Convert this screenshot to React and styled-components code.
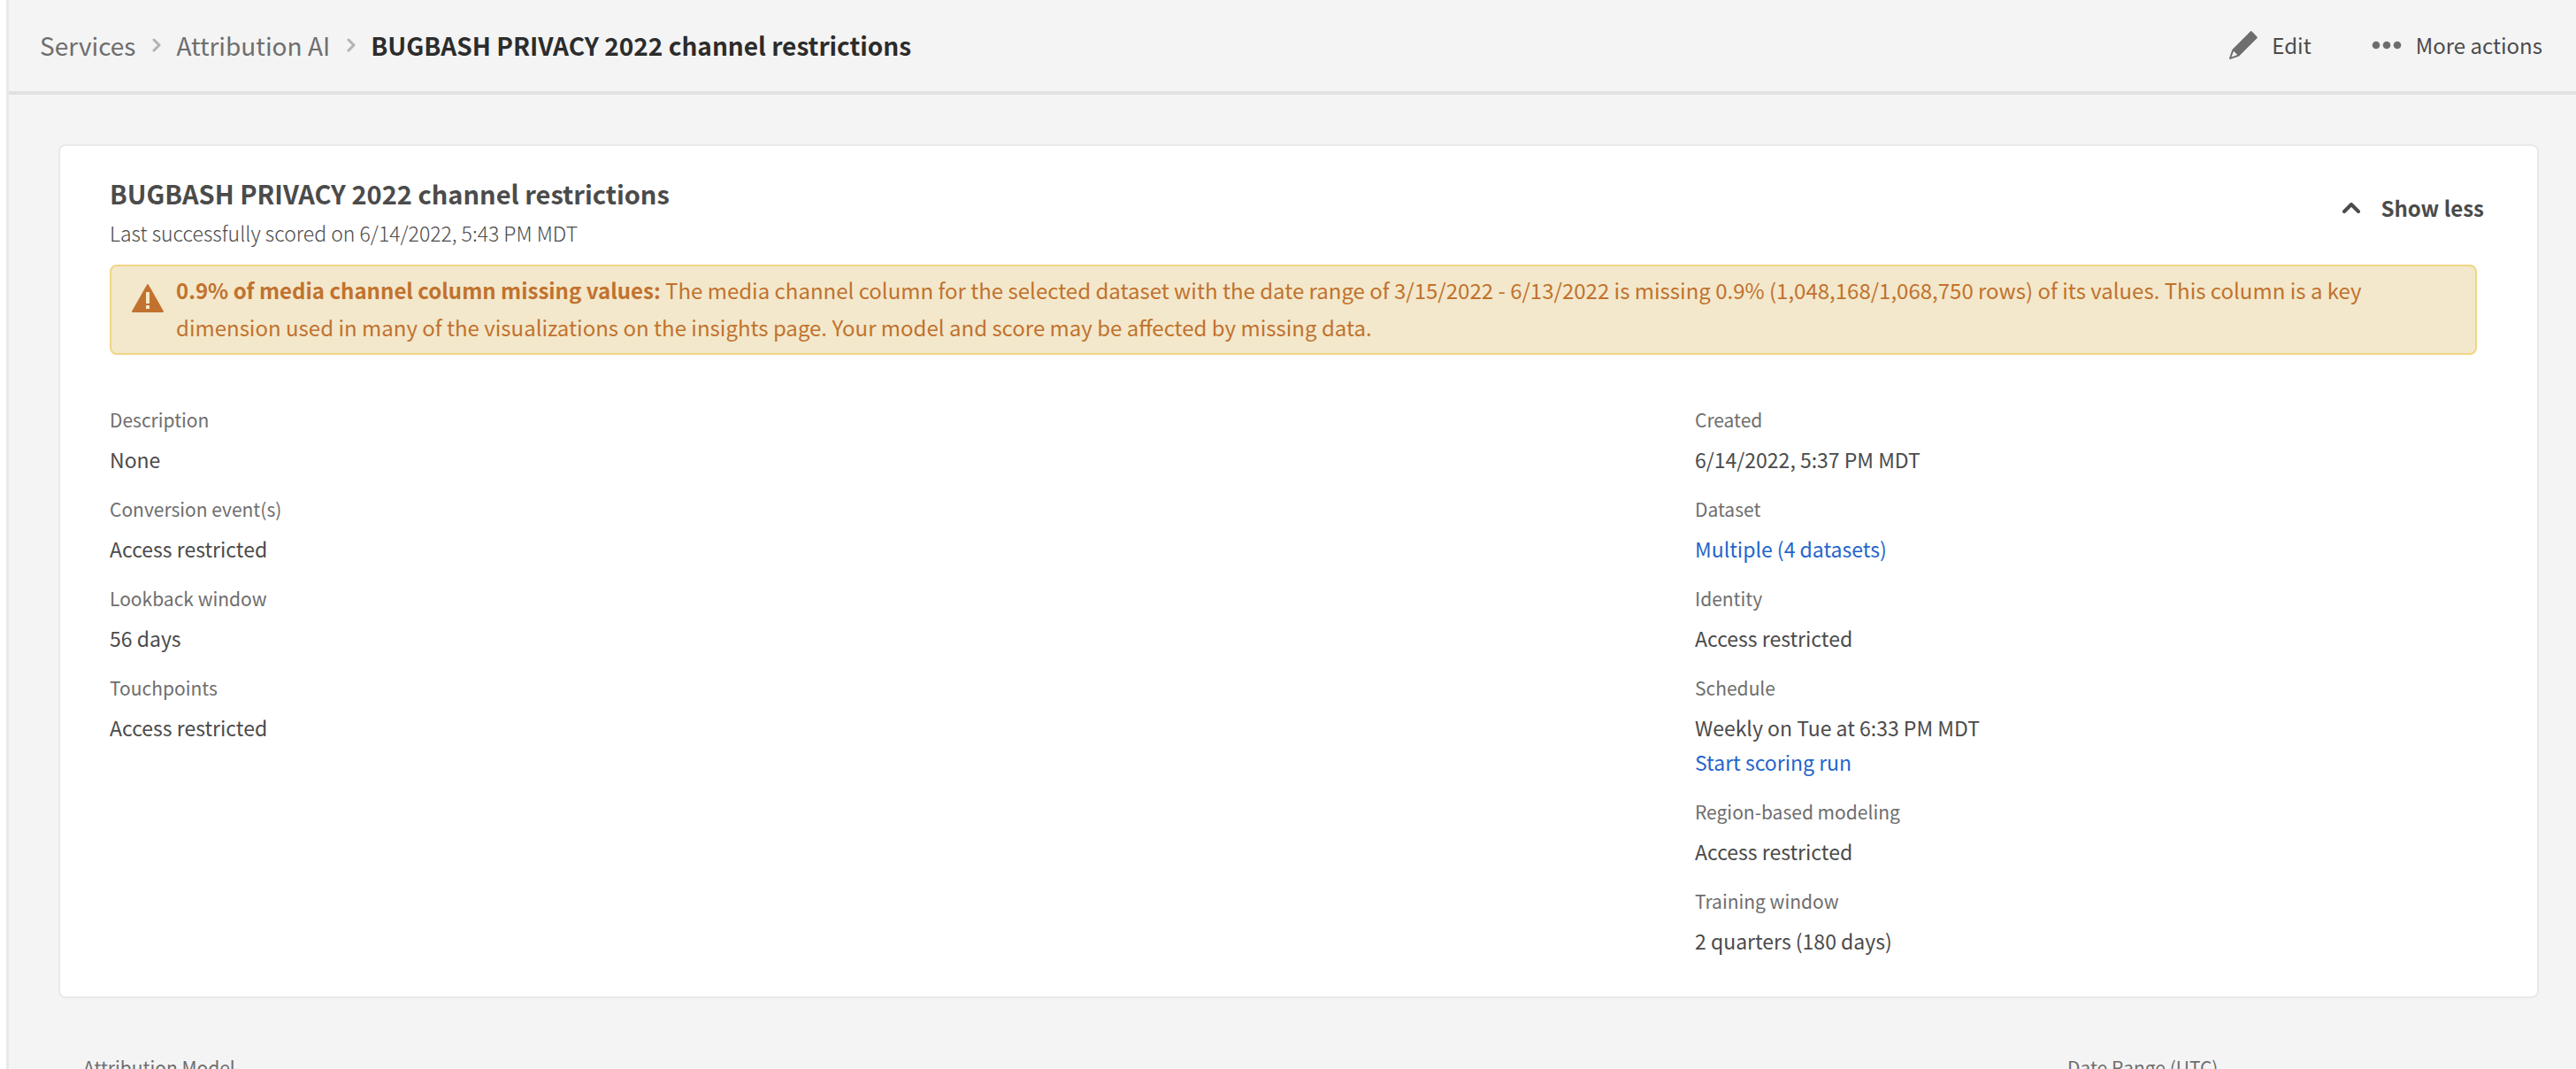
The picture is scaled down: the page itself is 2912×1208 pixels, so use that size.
import React, { useState } from 'react';
import styled, { createGlobalStyle } from 'styled-components';

const GlobalStyle = createGlobalStyle`
  * {
    box-sizing: border-box;
  }

  body {
    margin: 0;
    background: #ffffff;
    color: #4b4b4b;
    font-family: 'Noto Sans CJK SC', 'Noto Sans', sans-serif;
    font-size: 23px;
    line-height: 40px;
  }
`;

const Shell = styled.div`
  height: 100vh;
  margin-left: 7px;
  overflow: hidden;
  border-left: 3px solid #e9e9e9;
  background: #f4f4f4;
`;

const Header = styled.header`
  display: flex;
  align-items: center;
  justify-content: space-between;
  padding: 31px 38px 32px 35px;
  border-bottom: 4px solid #e1e1e1;
`;

const Crumbs = styled.ol`
  display: flex;
  align-items: center;
  gap: 16px;
  margin: 0;
  padding: 0;
  list-style: none;
  font-size: 28px;
`;

const Crumb = styled.li`
  display: flex;
  align-items: center;
  gap: 18px;
  color: #2c2c2c;
  font-weight: ${({ $current }) => ($current ? 700 : 400)};
`;

const CrumbLink = styled.a`
  color: #6e6e6e;
  text-decoration: none;
`;

const Actions = styled.div`
  display: flex;
  gap: 68px;
`;

const QuietButton = styled.button`
  display: flex;
  align-items: center;
  gap: ${({ $gap }) => $gap}px;
  margin: 0;
  padding: 0;
  border: 0;
  background: none;
  color: #4b4b4b;
  font-family: inherit;
  font-size: 24px;
  font-weight: ${({ $strong }) => ($strong ? 700 : 400)};
  line-height: 40px;
  cursor: pointer;
`;

const Main = styled.main`
  padding: 56px 42px 0 56px;
`;

const Card = styled.section`
  padding: 33px 60px 43px 56px;
  border: 2px solid #e9e9e9;
  border-radius: 8px;
  background: #ffffff;
`;

const CardHead = styled.div`
  display: flex;
  align-items: flex-start;
  justify-content: space-between;
  margin-bottom: 20px;
`;

const CardToggle = styled.div`
  padding-top: 17px;
`;

const Title = styled.h1`
  margin: 0 0 9px;
  font-size: 29px;
  font-weight: 700;
  line-height: 40px;
`;

const Subtitle = styled.p`
  margin: 0;
  font-weight: 300;
  line-height: 32px;
`;

const Alert = styled.div`
  display: flex;
  gap: 14px;
  margin-right: 8px;
  padding: 6px 40px 8px 23px;
  border: 2px solid #f0d584;
  border-radius: 8px;
  background: #f3e8cb;
  color: #c1722e;
  font-size: 24px;
  line-height: 42px;
`;

const AlertIcon = styled.svg`
  flex: none;
  width: 36px;
  height: 32px;
  margin-top: 14px;
`;

const AlertText = styled.p`
  margin: 0;
`;

const Details = styled.div`
  display: grid;
  grid-template-columns: 2fr 1fr;
  column-gap: 8px;
  margin-top: 54px;
`;

const Column = styled.dl`
  display: flex;
  flex-direction: column;
  gap: 17px;
  margin: 0;
`;

const Term = styled.dt`
  margin-bottom: 6px;
  color: #6e6e6e;
  font-size: 21px;
  line-height: 39px;
`;

const Value = styled.dd`
  margin: 0;
  line-height: 39px;
`;

const ValueLink = styled.a`
  color: #2465cb;
  text-decoration: none;
`;

const Filters = styled.div`
  display: flex;
  justify-content: space-between;
  padding: 62px 28px 0;
`;

const FilterLabel = styled.div`
  flex: ${({ $width }) => ($width ? `0 0 ${$width}px` : '1')};
  color: #6e6e6e;
  font-size: 21px;
  line-height: 32px;
`;

const CrumbChevron = () => (
  <svg width="12" height="16" viewBox="0 0 12 16" fill="none" aria-hidden="true">
    <path d="M3 2l6 6-6 6" stroke="#b3b3b3" strokeWidth="3" strokeLinecap="round" strokeLinejoin="round" />
  </svg>
);

const PencilIcon = () => (
  <svg width="32" height="32" viewBox="0 0 32 32" fill="#6e6e6e" aria-hidden="true">
    <path
      fillRule="evenodd"
      d="M23.8.6a1.2 1.2 0 0 1 1.8 0l5.8 5.8a1.2 1.2 0 0 1 0 1.8L11 28.6 1 32a.8.8 0 0 1-1-1l3.4-10zM5 22.8L2.4 29.6l6.8-2.6z"
    />
  </svg>
);

const MoreIcon = () => (
  <svg width="34" height="10" viewBox="0 0 34 10" fill="#6e6e6e" aria-hidden="true">
    <circle cx="5" cy="5" r="4.3" />
    <circle cx="17" cy="5" r="4.3" />
    <circle cx="29" cy="5" r="4.3" />
  </svg>
);

const CollapseIcon = () => (
  <svg width="20" height="12" viewBox="0 0 20 12" fill="none" aria-hidden="true">
    <path d="M2 10l8-8 8 8" stroke="#4b4b4b" strokeWidth="4" strokeLinecap="round" strokeLinejoin="round" />
  </svg>
);

const WarningIcon = () => (
  <AlertIcon viewBox="0 0 36 32" aria-hidden="true">
    <path d="M17.2.6a1 1 0 0 1 1.6 0l17 30a1 1 0 0 1-.8 1.4H1a1 1 0 0 1-.8-1.4z" fill="#c1722e" />
    <rect x="16" y="9" width="4" height="13" rx="0.6" fill="#f3e8cb" />
    <rect x="16" y="24" width="4" height="4" rx="0.6" fill="#f3e8cb" />
  </AlertIcon>
);

const leftDetails = [
  { term: 'Description', values: [{ text: 'None' }] },
  { term: 'Conversion event(s)', values: [{ text: 'Access restricted' }] },
  { term: 'Lookback window', values: [{ text: '56 days' }] },
  { term: 'Touchpoints', values: [{ text: 'Access restricted' }] },
];

const rightDetails = [
  { term: 'Created', values: [{ text: '6/14/2022, 5:37 PM MDT' }] },
  { term: 'Dataset', values: [{ text: 'Multiple (4 datasets)', href: '#datasets' }] },
  { term: 'Identity', values: [{ text: 'Access restricted' }] },
  {
    term: 'Schedule',
    values: [{ text: 'Weekly on Tue at 6:33 PM MDT' }, { text: 'Start scoring run', href: '#run' }],
  },
  { term: 'Region-based modeling', values: [{ text: 'Access restricted' }] },
  { term: 'Training window', values: [{ text: '2 quarters (180 days)' }] },
];

const DetailColumn = ({ items }) => (
  <Column>
    {items.map(({ term, values }) => (
      <div key={term}>
        <Term>{term}</Term>
        {values.map(({ text, href }) => (
          <Value key={text}>{href ? <ValueLink href={href}>{text}</ValueLink> : text}</Value>
        ))}
      </div>
    ))}
  </Column>
);

export default function App() {
  const [open, setOpen] = useState(true);

  return (
    <>
      <GlobalStyle />
      <Shell>
        <Header>
          <nav aria-label="Breadcrumb">
            <Crumbs>
              <Crumb>
                <CrumbLink href="#services">Services</CrumbLink>
                <CrumbChevron />
              </Crumb>
              <Crumb>
                <CrumbLink href="#attribution-ai">Attribution AI</CrumbLink>
                <CrumbChevron />
              </Crumb>
              <Crumb $current aria-current="page">
                BUGBASH PRIVACY 2022 channel restrictions
              </Crumb>
            </Crumbs>
          </nav>
          <Actions>
            <QuietButton type="button" $gap={16}>
              <PencilIcon />
              Edit
            </QuietButton>
            <QuietButton type="button" $gap={16}>
              <MoreIcon />
              More actions
            </QuietButton>
          </Actions>
        </Header>
        <Main>
          <Card>
            <CardHead>
              <div>
                <Title>BUGBASH PRIVACY 2022 channel restrictions</Title>
                <Subtitle>Last successfully scored on 6/14/2022, 5:43 PM MDT</Subtitle>
              </div>
              <CardToggle>
                <QuietButton type="button" $gap={23} $strong aria-expanded={open} onClick={() => setOpen(!open)}>
                  <CollapseIcon />
                  {open ? 'Show less' : 'Show more'}
                </QuietButton>
              </CardToggle>
            </CardHead>
            <Alert role="alert">
              <WarningIcon />
              <AlertText>
                <strong>0.9% of media channel column missing values:</strong> The media channel column for the
                selected dataset with the date range of 3/15/2022 - 6/13/2022 is missing 0.9% (1,048,168/1,068,750
                rows) of its values. This column is a key dimension used in many of the visualizations on the
                insights page. Your model and score may be affected by missing data.
              </AlertText>
            </Alert>
            {open && (
              <Details>
                <DetailColumn items={leftDetails} />
                <DetailColumn items={rightDetails} />
              </Details>
            )}
          </Card>
          <Filters>
            <FilterLabel>Attribution Model</FilterLabel>
            <FilterLabel $width={505}>Date Range (UTC)</FilterLabel>
          </Filters>
        </Main>
      </Shell>
    </>
  );
}
